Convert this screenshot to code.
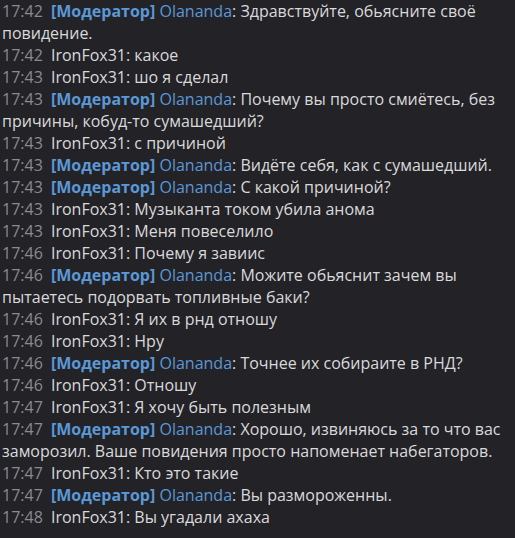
import React from "react";

type Msg = { t: string; mod?: boolean; name: string; text: string };

const msgs: Msg[] = [
  { t: "17:42", mod: true, name: "Olananda", text: "Здравствуйте, обьясните своё повидение." },
  { t: "17:42", name: "IronFox31", text: "какое" },
  { t: "17:43", name: "IronFox31", text: "шо я сделал" },
  { t: "17:43", mod: true, name: "Olananda", text: "Почему вы просто смиётесь, без причины, кобуд-то сумашедший?" },
  { t: "17:43", name: "IronFox31", text: "с причиной" },
  { t: "17:43", mod: true, name: "Olananda", text: "Видёте себя, как с сумашедший." },
  { t: "17:43", mod: true, name: "Olananda", text: "С какой причиной?" },
  { t: "17:43", name: "IronFox31", text: "Музыканта током убила анома" },
  { t: "17:43", name: "IronFox31", text: "Меня повеселило" },
  { t: "17:46", name: "IronFox31", text: "Почему я завиис" },
  { t: "17:46", mod: true, name: "Olananda", text: "Можите обьяснит зачем вы пытаетесь подорвать топливные баки?" },
  { t: "17:46", name: "IronFox31", text: "Я их в рнд отношу" },
  { t: "17:46", name: "IronFox31", text: "Нру" },
  { t: "17:46", mod: true, name: "Olananda", text: "Точнее их собираите в РНД?" },
  { t: "17:46", name: "IronFox31", text: "Отношу" },
  { t: "17:47", name: "IronFox31", text: "Я хочу быть полезным" },
  { t: "17:47", mod: true, name: "Olananda", text: "Хорошо, извиняюсь за то что вас заморозил. Ваше повидения просто напоменает набегаторов." },
  { t: "17:47", name: "IronFox31", text: "Кто это такие" },
  { t: "17:47", mod: true, name: "Olananda", text: "Вы размороженны." },
  { t: "17:48", name: "IronFox31", text: "Вы угадали ахаха" },
];

export default function App() {
  return (
    <div
      className="w-[515px] h-[538px] bg-[#232227] text-[#d9d9db] text-[16px] leading-[22px] pl-[2px] pr-[4px] overflow-hidden"
      style={{ fontFamily: '"Open Sans", sans-serif' }}
    >
      {msgs.map((m, i) => (
        <div key={i}>
          <span className="text-[#8b8b8f] mr-[4px]">{m.t}</span>{" "}
          {m.mod ? (
            <>
              <span className="font-bold text-[#5b98d6]">[Модератор]</span>{" "}
              <span className="text-[#5b98d6]">{m.name}</span>
            </>
          ) : (
            <span>{m.name}</span>
          )}
          : {m.text}
        </div>
      ))}
    </div>
  );
}
